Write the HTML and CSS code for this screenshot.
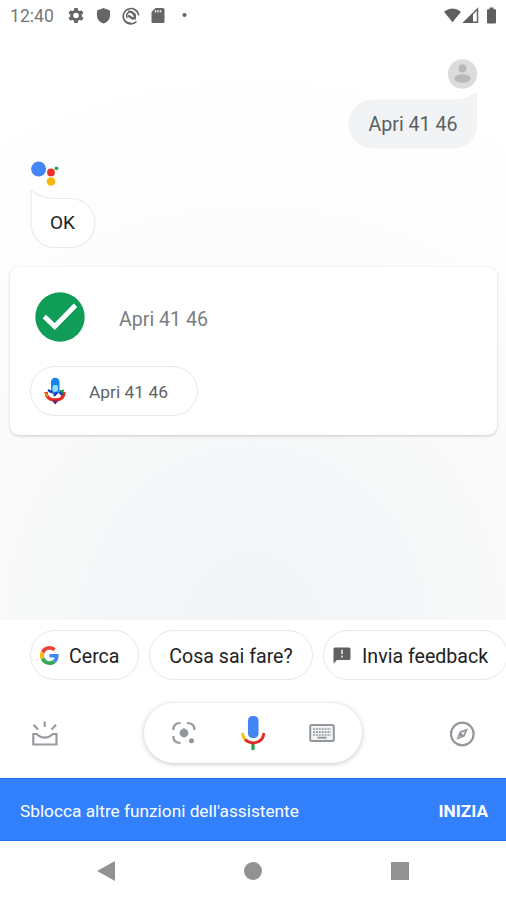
FILE: index.html
```html
<!DOCTYPE html>
<html lang="it">
<head>
<meta charset="utf-8">
<title>Assistente</title>
<link rel="stylesheet" href="styles.css">
</head>
<body>
<div class="phone">
  <header class="status">
    <span class="clock">12:40</span>
    <svg class="status-left" width="122" height="20" viewBox="0 0 122 20" fill="#666">
      <g transform="translate(9 9.500)">
        <circle r="4.300" fill="none" stroke="#666" stroke-width="3"/>
        <g stroke="#666" stroke-width="3.600"><path d="M0-7.600V-4.800M0 4.800V7.600M-6.600-3.800L-4.200-2.400M6.600 3.800L4.200 2.400M-6.600 3.800L-4.200 2.400M6.600-3.800L4.200-2.400"/></g>
      </g>
      <path d="M36.500 2L43 4.500V9.500C43 13.500 40 16.500 36.500 17.500C33 16.500 30 13.500 30 9.500V4.500Z"/>
      <g fill="none" stroke="#666">
        <path d="M69.500 15.500A7.700 7.700 0 1 1 71.600 9.500" stroke-width="1.600"/>
        <path d="M57 14.500Q60 17.200 64 17.200" stroke-width="1.600"/>
        <path d="M60.300 11.800A4.200 4.200 0 0 1 61.500 6.400M67.400 7.200A4.200 4.200 0 0 1 66.200 12.800" stroke-width="1.500"/>
        <path d="M61 5.800Q65 5 67 8.500Q68.500 11 67.500 13.500M61 9.500L66.500 13" stroke-width="2.200"/>
      </g>
      <path d="M88.500 2H96Q97.500 2 97.500 3.500V15.500Q97.500 17 96 17H86Q84.500 17 84.500 15.500V6Z"/>
      <path d="M88.500 4V6.500M91 4V6.500M93.500 4V6.500" stroke="#ddd" stroke-width="1.500"/>
      <circle cx="117.500" cy="9" r="2.100"/>
    </svg>
    <svg class="status-right" width="56" height="20" viewBox="0 0 56 20" fill="#5f5f5f">
      <path d="M1 5.800Q9.500-.8 18 5.800L9.500 16.300Z"/>
      <path d="M34.500 3V16.300H21.200Z" fill="none" stroke="#666" stroke-width="1.500"/>
      <path d="M20 17L30 7V17Z"/>
      <path d="M46.500 3.300H44.500Q44 3.300 44 4V16.500Q44 17.500 45 17.500H52Q53 17.500 53 16.500V4Q53 3.300 52.500 3.300H50.500V1.500H46.500Z"/>
    </svg>
  </header>

  <main class="talk">
    <div class="user">
      <svg class="avatar" width="30" height="30" viewBox="0 0 30 30"><circle cx="14.500" cy="15" r="14.700" fill="#dcdcdc"/><circle cx="14.500" cy="9.600" r="4" fill="#b9b9b9"/><ellipse cx="14.500" cy="19.500" rx="8.200" ry="4.300" fill="#b9b9b9"/></svg>
      <div class="bubble said">
        <svg class="shape" width="130" height="58" viewBox="0 0 130 58"><path d="M129 0V32C129 46 119 56.500 104 56.500H25A24.500 24.500 0 0 1 25 7.500H104Q119 7.500 129 0Z" fill="#f1f3f4"/></svg>
        <span>Apri 41 46</span>
      </div>
    </div>
    <svg class="logo" width="30" height="28" viewBox="0 0 30 28"><circle cx="8.600" cy="9" r="7.500" fill="#4285f4"/><circle cx="21" cy="12.400" r="3.900" fill="#e5322d"/><circle cx="26.500" cy="8.300" r="1.900" fill="#34a853"/><circle cx="21" cy="21.500" r="4.300" fill="#fbb60c"/></svg>
    <div class="bubble reply">
      <svg class="shape" width="66" height="60" viewBox="0 0 66 60"><path d="M1 .5V33C1 47 11 57.500 25 57.500H40.500A24.500 24.500 0 0 0 40.500 8.500H25Q11 8.500 1 .5Z" fill="#fff" stroke="#e8eaeb" stroke-width="1.200"/></svg>
      <span>OK</span>
    </div>
    <section class="card">
      <div class="result">
        <svg width="50" height="50" viewBox="0 0 50 50"><circle cx="25" cy="25" r="24.700" fill="#0f9d58"/><path d="M9.300 24.500L19.700 34.500L40.500 13.200" fill="none" stroke="#fff" stroke-width="4.800"/></svg>
        <span>Apri 41 46</span>
      </div>
      <div class="pill action">
        <svg width="22" height="28" viewBox="0 0 22 28">
          <rect x="7" y=".7" width="8.500" height="17" rx="4.200" fill="#1684e8"/>
          <rect x="8.500" y="8" width="5.500" height="7" rx="2" fill="#8fdcff"/>
          <path d="M2 15Q2.500 23 11.200 23T20 15" fill="none" stroke="#e52c24" stroke-width="3.300"/>
          <path d="M.5 16L3.500 17L3.500 20.500Z" fill="#fbbc05"/>
          <path d="M14.500 13.500L20 12.500L19 17.500Z" fill="#159b48"/>
          <path d="M4 13L8 15.500M13 15L10 19M15.500 15L18 18" fill="none" stroke="#183bb8" stroke-width="2.300"/>
          <path d="M5.500 18L10 20M12.500 19L16 20" fill="none" stroke="#fff" stroke-width="1.500"/>
          <path d="M8 23.500H14.500L11.200 27.500Z" fill="#5b2464"/>
        </svg>
        <span>Apri 41 46</span>
      </div>
    </section>
  </main>

  <div class="chips">
    <div class="pill search">
      <svg width="19" height="19" viewBox="0 0 48 48"><path fill="#EA4335" d="M24 9.500c3.540 0 6.710 1.220 9.210 3.600l6.850-6.850C35.900 2.380 30.470 0 24 0 14.620 0 6.510 5.380 2.560 13.220l7.980 6.190C12.430 13.720 17.740 9.500 24 9.500z"/><path fill="#4285F4" d="M46.980 24.550c0-1.570-.15-3.090-.38-4.550H24v9.020h12.940c-.58 2.960-2.260 5.480-4.780 7.180l7.730 6c4.510-4.180 7.090-10.360 7.090-17.650z"/><path fill="#FBBC05" d="M10.530 28.590A14.500 14.500 0 0 1 10.530 19.410L2.560 13.220A24 24 0 0 0 2.560 34.780z"/><path fill="#34A853" d="M24 48c6.480 0 11.930-2.130 15.890-5.810l-7.730-6c-2.150 1.450-4.920 2.300-8.160 2.300-6.260 0-11.570-4.220-13.470-9.910l-7.970 6.200C6.510 42.620 14.620 48 24 48z"/></svg>
      <span>Cerca</span>
    </div>
    <div class="pill ask"><span>Cosa sai fare?</span></div>
    <div class="pill feedback">
      <svg width="18" height="17" viewBox="0 0 18 17"><path d="M2 .5H16Q17.500 .5 17.500 2V11.500Q17.500 13 16 13H4L.5 16.500V2Q.5 .5 2 .5Z" fill="#616161"/><path d="M9 2.700V7M9 8.500V10.500" stroke="#ddd" stroke-width="1.800"/></svg>
      <span>Invia feedback</span>
    </div>
  </div>

  <div class="controls">
    <svg width="28" height="28" viewBox="0 0 28 28" fill="none" stroke="#969ba0" stroke-width="2.200"><path d="M13.700 1.500V7M2.500 4.700L7 9.500M25 4.700L20.500 9.500M2.300 14H5.500Q9.500 17.700 13.700 17.700T22 14H25.500V24.500H2.300Z"/></svg>
    <div class="dock">
      <svg width="26" height="26" viewBox="0 0 26 26" fill="none" stroke="#92979c" stroke-width="2.200"><path d="M2.300 10Q2.300 3 9.500 3M16 3Q23.500 3 23.500 10M2.300 16Q2.300 23 9.500 23"/><circle cx="13" cy="13" r="4.400" fill="#92979c" stroke="none"/><circle cx="20.500" cy="20.700" r="2.500" fill="#92979c" stroke="none"/></svg>
      <svg width="26" height="36" viewBox="0 0 26 36"><path d="M13 29V35" stroke="#20a552" stroke-width="3.200"/><rect x="8" y="1" width="10.500" height="22" rx="4.500" fill="#4285f4"/><path d="M2.500 18Q2.800 22 5.200 24.700" fill="none" stroke="#fbbc05" stroke-width="2.800"/><path d="M5.100 24.600Q8.500 28 13.200 28Q23 27.300 24 18" fill="none" stroke="#df2923" stroke-width="2.800"/></svg>
      <svg width="26" height="20" viewBox="0 0 26 20"><rect x="1.200" y="2" width="23.600" height="16" rx="1.500" fill="#f3f4f5" stroke="#92979c" stroke-width="2"/><path d="M4 6H22M4 9.200H22M4 12H22" stroke="#92979c" stroke-width="1.700" stroke-dasharray="1.900 1"/><path d="M8.500 14.700H17.500" stroke="#92979c" stroke-width="1.900"/></svg>
    </div>
    <svg width="26" height="26" viewBox="0 0 26 26"><circle cx="13.300" cy="13" r="11.300" fill="none" stroke="#92979c" stroke-width="2.200"/><path d="M19 7.200L15.700 15.500L7.400 18.800L10.700 10.500Z" fill="#92979c"/><path d="M12 11.800L16 10.200L14.400 14.200Z" fill="#eee"/><path d="M11.200 15L10 16.200" stroke="#eee"/></svg>
  </div>

  <div class="banner"><span>Sblocca altre funzioni dell'assistente</span><b>INIZIA</b></div>

  <nav class="nav">
    <svg width="18" height="20" viewBox="0 0 18 20"><path d="M0 10L18 0V20Z" fill="#929292"/></svg>
    <svg width="18" height="18" viewBox="0 0 18 18"><circle cx="9" cy="9" r="9" fill="#929292"/></svg>
    <svg width="18" height="18" viewBox="0 0 18 18"><rect width="18" height="18" fill="#929292"/></svg>
  </nav>
</div>
</body>
</html>
```
FILE: styles.css
```css
* { box-sizing: border-box; }
body { margin: 0; background: #fff; font-family: Roboto, "Liberation Sans", sans-serif; }
svg { display: block; flex: none; }
span, b { white-space: nowrap; }
.phone { width: 506px; height: 900px; display: flex; flex-direction: column; overflow: hidden; }
.status { height: 31px; flex: none; display: flex; align-items: center; padding: 1px 7px 0 10px; color: #777; }
.clock { width: 57px; font-size: 17.600px; line-height: 20px; }
.status-right { margin-left: auto; }
.talk { height: 589px; flex: none; display: flex; flex-direction: column; background: radial-gradient(ellipse 560px 570px at 50% 100%, #f2f4f5 0, #f5f7f8 30%, #fafafa 52%, #fdfdfd 75%, #fff 100%); }
.user { display: flex; flex-direction: column; align-items: flex-end; padding: 28px 28px 0 0; }
.bubble { position: relative; display: flex; align-items: center; justify-content: center; font-size: 19.600px; }
.bubble span { position: relative; }
.shape { position: absolute; left: 0; top: 0; }
.said { width: 130px; height: 58px; margin-top: 3px; padding-top: 6px; color: #5b5f63; }
.logo { margin: 10px 0 0 30px; }
.reply { width: 66px; height: 60px; margin: 2px 0 0 30px; padding: 5px 1px 0 0; color: #222; font-size: 19px; }
.card { height: 168px; margin: 17px 9px 0 10px; padding: 25px 20px 0; border-radius: 9px; background: #fff; box-shadow: 0 1px 3px rgba(60, 64, 67, .25); }
.result { display: flex; align-items: center; gap: 34px; padding-left: 5px; font-size: 19.600px; color: #7a7d80; }
.result span { padding-top: 4px; }
.pill { height: 50px; flex: none; display: flex; align-items: center; border: 1px solid #e6e8ea; border-radius: 25px; background: #fff; }
.action { width: 168px; margin-top: 24px; padding-left: 13px; gap: 23px; font-size: 17.400px; color: #5f6368; }
.action span { padding-top: 2px; }
.chips { height: 70px; flex: none; display: flex; align-items: flex-start; gap: 10px; padding: 10px 0 0 30px; font-size: 19.600px; color: #222; overflow: hidden; }
.chips span { padding-top: 2px; }
.search { width: 109px; padding-left: 9px; gap: 10px; }
.ask { width: 164px; justify-content: center; }
.feedback { width: 185px; padding-left: 9px; gap: 11px; }
.controls { height: 88px; flex: none; display: flex; align-items: center; justify-content: space-between; padding: 0 31px 1px; }
.dock { width: 218px; height: 60px; display: flex; align-items: center; justify-content: space-between; padding: 0 27px; margin: 0 2px 2px 0; border-radius: 30px; background: #fff; box-shadow: 0 1px 5px rgba(60, 64, 67, .3); }
.banner { height: 63px; flex: none; display: flex; align-items: center; justify-content: space-between; padding: 2px 18px 0 20px; background: #3280fc; border-top: 1px solid #1f6eeb; border-bottom: 1px solid #1f6eeb; color: #fff; font-size: 17.250px; }
.nav { height: 59px; flex: none; display: flex; align-items: center; justify-content: space-between; padding: 0 97px; }
```
